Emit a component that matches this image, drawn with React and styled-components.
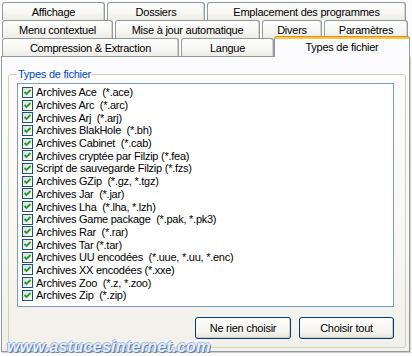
import React from 'react'
import styled, { createGlobalStyle } from 'styled-components'

const GlobalStyle = createGlobalStyle`
  html, body {
    margin: 0;
    padding: 0;
    background: #fcfcfe;
  }
  * {
    box-sizing: border-box;
  }
`

const tabRows = [
  [
    { label: 'Affichage', width: 103 },
    { label: 'Dossiers', width: 98 },
    { label: 'Emplacement des programmes', width: 199 },
  ],
  [
    { label: 'Menu contextuel', width: 111 },
    { label: 'Mise à jour automatique', width: 145 },
    { label: 'Divers', width: 60 },
    { label: 'Paramètres', width: 84 },
  ],
  [
    { label: 'Compression & Extraction', width: 177 },
    { label: 'Langue', width: 93 },
    { label: 'Types de fichier', width: 136, active: true },
  ],
]

const fileTypes = [
  'Archives Ace  (*.ace)',
  'Archives Arc  (*.arc)',
  'Archives Arj  (*.arj)',
  'Archives BlakHole  (*.bh)',
  'Archives Cabinet  (*.cab)',
  'Archives cryptée par Filzip (*.fea)',
  'Script de sauvegarde Filzip (*.fzs)',
  'Archives GZip  (*.gz, *.tgz)',
  'Archives Jar  (*.jar)',
  'Archives Lha  (*.lha, *.lzh)',
  'Archives Game package  (*.pak, *.pk3)',
  'Archives Rar  (*.rar)',
  'Archives Tar (*.tar)',
  'Archives UU encodées  (*.uue, *.uu, *.enc)',
  'Archives XX encodées (*.xxe)',
  'Archives Zoo  (*.z, *.zoo)',
  'Archives Zip  (*.zip)',
]

function CheckBox() {
  return (
    <svg width='11' height='11' viewBox='0 0 11 11'>
      <defs>
        <linearGradient id='cbfill' x1='0' y1='0' x2='1' y2='1'>
          <stop offset='0' stopColor='#dcdcd7' />
          <stop offset='1' stopColor='#ffffff' />
        </linearGradient>
      </defs>
      <rect x='0.5' y='0.5' width='10' height='10' fill='url(#cbfill)' stroke='#1c5180' />
      <path d='M2.5 5 L4.5 7 L8.5 3' fill='none' stroke='#21a121' strokeWidth='1.8' />
    </svg>
  )
}

export default function App() {
  return (
    <>
      <GlobalStyle />
      <Dialog>
        <TabStrip>
          {tabRows.map((row, i) => (
            <TabRow key={i}>
              {row.map((tab) => (
                <Tab key={tab.label} $width={tab.width} $active={tab.active}>
                  {tab.label}
                </Tab>
              ))}
            </TabRow>
          ))}
        </TabStrip>
        <TabPage>
          <GroupBox>
            <Legend>Types de fichier</Legend>
            <ListBox>
              {fileTypes.map((t) => (
                <Item key={t}>
                  <CheckBox />
                  <span>{t}</span>
                </Item>
              ))}
            </ListBox>
            <Buttons>
              <Button $width={96}>Ne rien choisir</Button>
              <Button $width={95}>Choisir tout</Button>
            </Buttons>
          </GroupBox>
          <Watermark>www.astucesinternet.com</Watermark>
        </TabPage>
      </Dialog>
    </>
  )
}

const Dialog = styled.div`
  width: 412px;
  height: 356px;
  padding-top: 2px;
  font-family: 'Liberation Sans', Arial, sans-serif;
  font-size: 11px;
  letter-spacing: -0.25px;
  color: #000;
  background: #fcfcfe;
  overflow: hidden;
`

const TabStrip = styled.div`
  display: flex;
  flex-direction: column;
  padding-left: 2px;
`

const TabRow = styled.div`
  display: flex;
  gap: 2px;
  height: 18px;
  align-items: flex-end;
`

const Tab = styled.div`
  position: relative;
  flex: none;
  width: ${(p) => p.$width}px;
  height: ${(p) => (p.$active ? 21 : 18)}px;
  margin-left: ${(p) => (p.$active ? -2 : 0)}px;
  margin-bottom: ${(p) => (p.$active ? -1 : 0)}px;
  z-index: ${(p) => (p.$active ? 2 : 1)};
  display: flex;
  align-items: center;
  justify-content: center;
  padding-top: ${(p) => (p.$active ? 0 : 1)}px;
  border: 1px solid #919b9c;
  border-bottom: none;
  border-top: ${(p) => (p.$active ? '1px solid #e68b2c' : '1px solid #919b9c')};
  border-radius: 3px 3px 0 0;
  background: ${(p) =>
    p.$active
      ? 'linear-gradient(#ffc83c 0, #ffc83c 2px, #fcfcfe 2px, #fcfcfe 100%)'
      : 'linear-gradient(#fefefe, #f6f6f3 60%, #ecebe5)'};
  box-shadow: ${(p) => (p.$active ? 'none' : 'inset -1px 0 0 #d6d5cc')};
  white-space: nowrap;
`

const TabPage = styled.div`
  position: relative;
  margin-left: 1px;
  width: 409px;
  height: 296px;
  padding: 11px 0 0 6px;
  border: 1px solid #919b9c;
  background: linear-gradient(#fcfcfe, #f7f7f4 60%, #f1f0ea);
  box-shadow: 1px 1px 0 #d0cfc4;
`

const GroupBox = styled.fieldset`
  margin: 0;
  width: 398px;
  height: 280px;
  padding: 2px 11px 0 8px;
  border: 1px solid #d0d0bf;
  border-radius: 3px;
  display: flex;
  flex-direction: column;
`

const Legend = styled.legend`
  padding: 0 1px;
  margin-left: 0;
  color: #0046d5;
  font-size: 11px;
  line-height: 13px;
`

const ListBox = styled.div`
  height: 224px;
  padding: 2px 0 0 4px;
  border: 1px solid #7f9db9;
  background: #fff;
`

const Item = styled.div`
  display: flex;
  align-items: center;
  gap: 3px;
  height: 12.7px;
  white-space: pre;
  span {
    line-height: 12px;
  }
`

const Buttons = styled.div`
  display: flex;
  justify-content: flex-end;
  gap: 8px;
  margin-top: 10px;
`

const Button = styled.button`
  width: ${(p) => p.$width}px;
  height: 22px;
  padding: 0;
  font-family: inherit;
  font-size: 11px;
  letter-spacing: inherit;
  color: #000;
  border: 1px solid #003c74;
  border-radius: 3px;
  background: linear-gradient(#ffffff, #f4f3ee 70%, #e6e3d8);
  box-shadow: inset -1px -1px 0 #d6d0c5;
`

const Watermark = styled.div`
  position: absolute;
  left: 5px;
  top: 281px;
  font-family: 'Liberation Sans', Arial, sans-serif;
  font-size: 16px;
  font-weight: bold;
  font-style: italic;
  letter-spacing: 0.3px;
  color: #e8eef8;
  text-shadow: 1px 1px 0 #5a7db8, -1px 0 0 #8ea8d2, 0 -1px 0 #a8bde0;
`
